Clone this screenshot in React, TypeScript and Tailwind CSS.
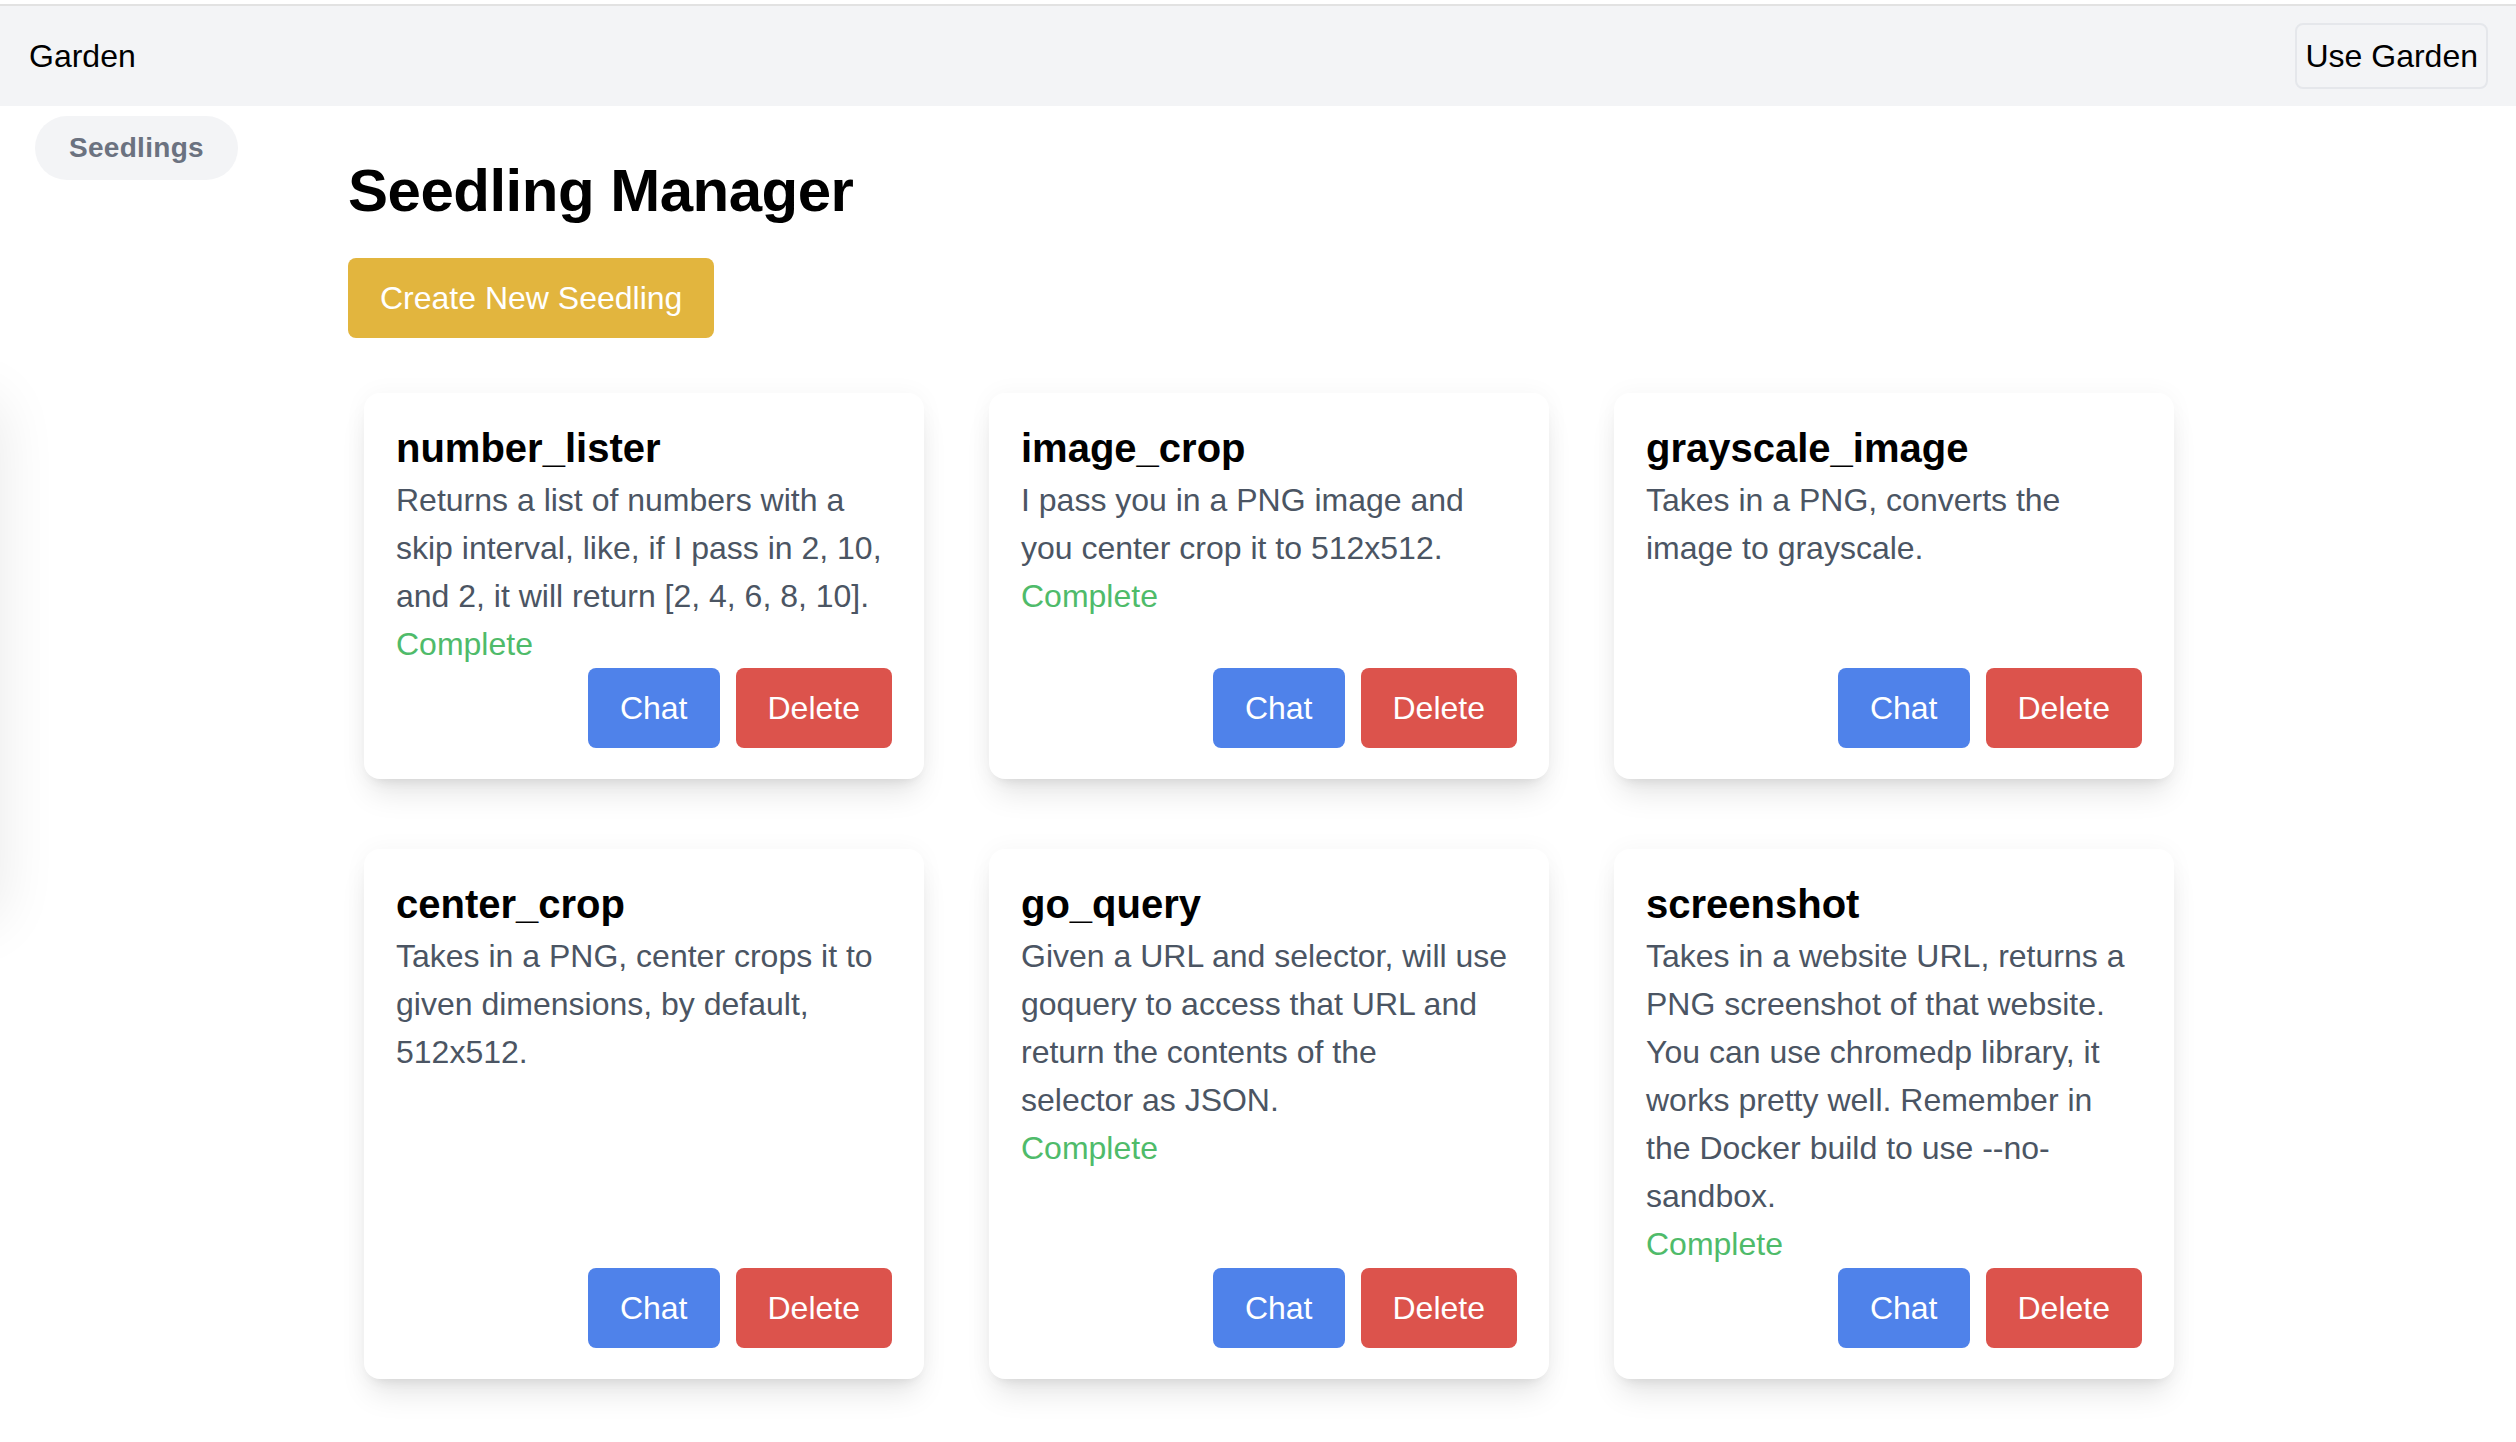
import React from 'react';

interface Seedling {
  name: string;
  lines: string[];
  complete: boolean;
}

const seedlings: Seedling[] = [
  {
    name: 'number_lister',
    lines: [
      'Returns a list of numbers with a',
      'skip interval, like, if I pass in 2, 10,',
      'and 2, it will return [2, 4, 6, 8, 10].',
    ],
    complete: true,
  },
  {
    name: 'image_crop',
    lines: ['I pass you in a PNG image and', 'you center crop it to 512x512.'],
    complete: true,
  },
  {
    name: 'grayscale_image',
    lines: ['Takes in a PNG, converts the', 'image to grayscale.'],
    complete: false,
  },
  {
    name: 'center_crop',
    lines: ['Takes in a PNG, center crops it to', 'given dimensions, by default,', '512x512.'],
    complete: false,
  },
  {
    name: 'go_query',
    lines: [
      'Given a URL and selector, will use',
      'goquery to access that URL and',
      'return the contents of the',
      'selector as JSON.',
    ],
    complete: true,
  },
  {
    name: 'screenshot',
    lines: [
      'Takes in a website URL, returns a',
      'PNG screenshot of that website.',
      'You can use chromedp library, it',
      'works pretty well. Remember in',
      'the Docker build to use --no-',
      'sandbox.',
    ],
    complete: true,
  },
];

const SeedlingCard: React.FC<{ seedling: Seedling }> = ({ seedling }) => (
  <div className="flex flex-col rounded-[16px] bg-white px-[32px] pt-[27px] pb-[31px] shadow-[0_20px_30px_-6px_rgba(0,0,0,0.1),0_8px_12px_-8px_rgba(0,0,0,0.1),0_0_24px_rgba(0,0,0,0.04)]">
    <h2 className="text-[40px] leading-[56px] font-bold text-black">{seedling.name}</h2>
    <p className="text-[32px] leading-[48px] text-[#4b5563]">
      {seedling.lines.map((line, i) => (
        <span key={i} className="block whitespace-nowrap">
          {line}
        </span>
      ))}
    </p>
    {seedling.complete && <p className="text-[32px] leading-[48px] text-[#4fbb6a]">Complete</p>}
    <div className="mt-auto flex justify-end gap-[16px]">
      <button className="rounded-[8px] bg-[#4f82ea] px-[32px] py-[16px] text-[32px] leading-[48px] text-white">
        Chat
      </button>
      <button className="rounded-[8px] bg-[#dc534c] px-[32px] py-[16px] text-[32px] leading-[48px] text-white">
        Delete
      </button>
    </div>
  </div>
);

export default function App() {
  return (
    <div className="relative min-h-screen overflow-hidden bg-white font-['Liberation_Sans',Arial,sans-serif] text-black">
      {/* offscreen drawer, only its shadow bleeds in */}
      <div className="absolute left-[-80px] top-[400px] h-[520px] w-[80px] rounded-[16px] bg-white shadow-[0_0_60px_rgba(0,0,0,0.09)]" />

      <div className="h-[4px] bg-white" />
      <header className="flex h-[102px] items-center justify-between border-t-2 border-[#e2e2e2] bg-[#f3f4f6] pl-[29px] pr-[28px]">
        <span className="text-[32px] leading-[48px]">Garden</span>
        <button className="rounded-[8px] border-2 border-[#e5e7eb] px-[8px] py-[7px] text-[32px] leading-[48px] text-black">
          Use Garden
        </button>
      </header>

      <div className="flex">
        <aside className="w-[348px] shrink-0 pl-[35px] pt-[10px]">
          <div className="inline-block rounded-full bg-[#f3f4f6] px-[34px] py-[12px] text-[28px] leading-[40px] font-bold tracking-[0.3px] text-[#6b7280]">
            Seedlings
          </div>
        </aside>

        <main className="flex-1 pt-[49px] pb-[64px]">
          <h1 className="text-[60px] leading-[72px] font-bold tracking-[-0.5px]">Seedling Manager</h1>
          <button className="mt-[31px] rounded-[8px] bg-[#e2b53e] px-[32px] py-[16px] text-[32px] leading-[48px] text-white">
            Create New Seedling
          </button>

          <div className="ml-[16px] mt-[55px] grid grid-cols-[repeat(3,560px)] gap-x-[65px] gap-y-[70px]">
            {seedlings.map((s) => (
              <SeedlingCard key={s.name} seedling={s} />
            ))}
          </div>
        </main>
      </div>
    </div>
  );
}
